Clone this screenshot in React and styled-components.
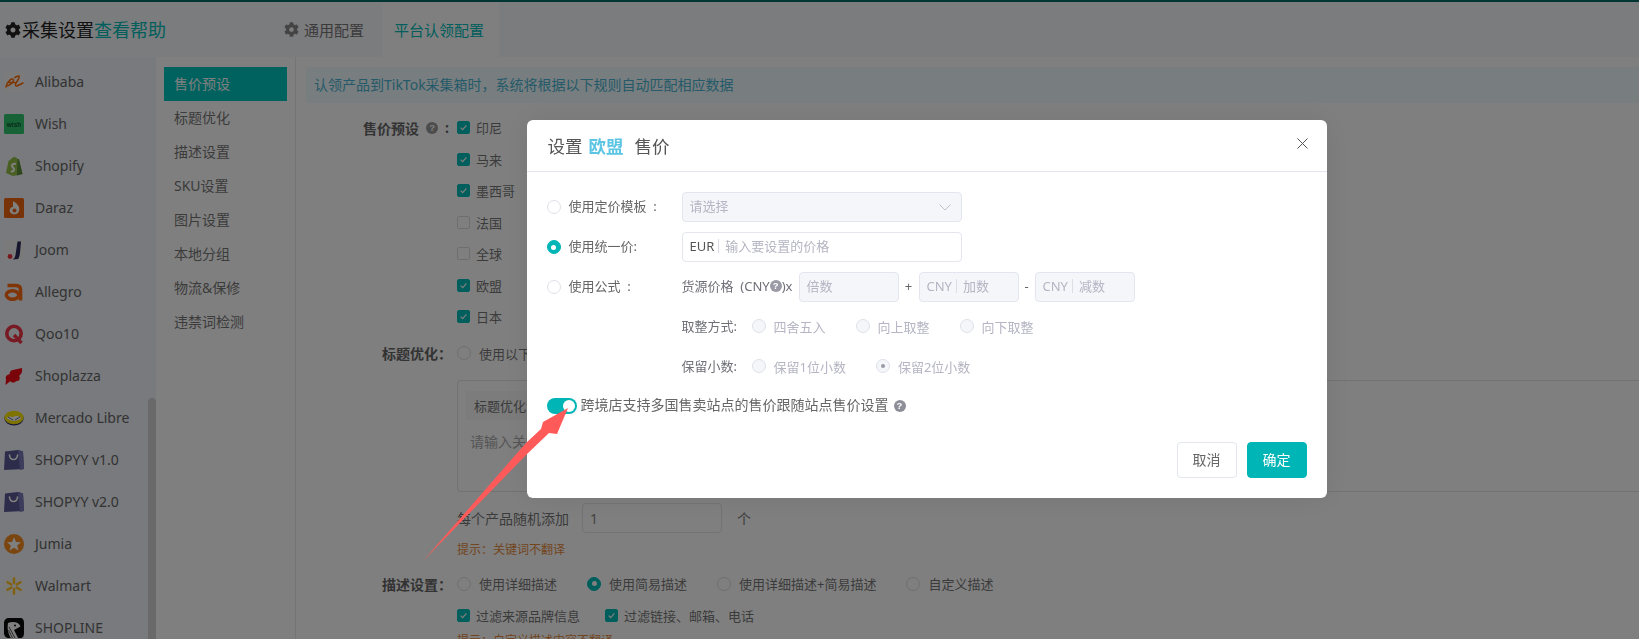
import React from "react";
import styled, { createGlobalStyle } from "styled-components";
import { FaCog } from "react-icons/fa";

const Global = createGlobalStyle`
  html, body { margin: 0; padding: 0; background: #fff; }
  body { font-family: "Noto Sans", "Noto Sans CJK SC", sans-serif; font-size: 14px; color: #444; }
  * { box-sizing: border-box; }
`;

const Page = styled.div`
  width: 1639px; height: 639px; overflow: hidden; display: flex; flex-direction: column; background: #fff;
`;
const TopStrip = styled.div`height: 2px; background: #006a68; flex: none;`;
const Header = styled.header`
  height: 55px; flex: none; display: flex; align-items: stretch; background: #f7f8fc;
`;
const Title = styled.div`
  display: flex; align-items: center; padding-left: 5px; width: 284px; font-size: 18px; line-height: 24px; color: #222;
  svg { font-size: 16px; margin-right: 1px; }
`;
const HelpLink = styled.span`color: #00bdb8;`;
const Tab = styled.div`
  display: flex; align-items: center; gap: 5px; font-size: 15px; padding: ${p => (p.$active ? "0 15px 0 12px" : "0 18px 0 0")};
  background: ${p => (p.$active ? "#fff" : "transparent")};
  color: ${p => (p.$active ? "#00bdb8" : "#777")};
  svg { font-size: 15px; color: #888; }
`;
const Body = styled.div`flex: 1; display: flex; min-height: 0;`;

const Sidebar = styled.nav`
  position: relative; width: 156px; flex: none; padding-top: 4px; background: #f1f4fa; overflow: hidden;
`;
const Thumb = styled.div`
  position: absolute; right: 0; top: 341px; bottom: 0; width: 8px; border-radius: 4px 4px 0 0; background: #d2d2d2;
`;
const PlatformRow = styled.div`
  height: 42px; display: flex; align-items: center; gap: 11px; padding-left: 4px; color: #666; font-size: 14px; line-height: 20px;
  svg { flex: none; }
`;

const SubNav = styled.nav`
  width: 140px; flex: none; padding: 10px 8px 0; border-right: 1px solid #e9e9e9; background: #fff;
`;
const SubItem = styled.div`
  height: 34px; display: flex; align-items: center; padding: 0 0 2px 10px; font-size: 14px;
  background: ${p => (p.$active ? "#00c4bc" : "transparent")};
  color: ${p => (p.$active ? "#fff" : "#777")};
`;

const Content = styled.main`flex: 1; padding: 10px 0 0 10px; min-width: 0; background: #fff;`;
const Alert = styled.div`
  height: 36px; display: flex; align-items: center; padding: 0 0 2px 8px; background: #f0fbfe; border-radius: 3px 0 0 3px;
  color: #49b5d2; font-size: 14px;
`;
const FormRow = styled.div`
  display: flex; align-items: center; min-height: 31.5px; margin-top: ${p => p.$mt || 0}px;
`;
const FormLabel = styled.div`
  width: 151px; flex: none; padding-right: ${p => p.$pr ?? 5}px; display: flex; justify-content: flex-end; align-items: center; gap: 7px;
  font-weight: 700; color: #666; font-size: 14px; white-space: nowrap;
`;
const FormValue = styled.div`display: flex; align-items: center; flex: 1; min-width: 0; color: #777; font-size: 13px; white-space: nowrap;`;
const CheckItem = styled.label`
  display: inline-flex; align-items: center; gap: 6px; margin-right: ${p => p.$mr || 0}px; color: #777;
`;
const Check = styled.span`
  width: 13px; height: 13px; flex: none; border-radius: 2px; display: inline-flex; align-items: center; justify-content: center;
  background: ${p => (p.$on ? "#00bdb8" : "#fff")};
  border: 1px solid ${p => (p.$on ? "#00bdb8" : "#ddd")};
  svg { display: block; }
`;
const PageRadio = styled.span`
  width: 14px; height: 14px; flex: none; border-radius: 50%; display: inline-flex; align-items: center; justify-content: center;
  border: 1px solid #ddd; background: ${p => (p.$on ? "#00bdb8" : "#fff")};
  border-color: ${p => (p.$on ? "#00bdb8" : "#ddd")};
  &::after { content: ""; width: 5px; height: 5px; border-radius: 50%; background: ${p => (p.$on ? "#fff" : "transparent")}; }
`;
const RadioItem = styled.label`
  display: inline-flex; align-items: center; gap: 8px; margin-right: ${p => p.$mr || 0}px; color: #777;
`;
const KeywordBox = styled.div`
  margin: 11px 0 0 151px; height: 112px; padding: 10px 8px; border: 1px solid #e4e4e4; border-right: 0; border-radius: 4px 0 0 4px;
`;
const KeywordHead = styled.div`
  height: 29px; width: 300px; display: flex; align-items: center; padding-left: 8px; background: #f8f8f8; font-size: 13px; color: #777;
`;
const KeywordHint = styled.div`margin: 12px 0 0 4px; color: #aaa; font-size: 14px; line-height: 20px;`;
const CountRow = styled.div`
  margin: 11px 0 0 151px; height: 30px; display: flex; align-items: center; color: #777;
`;
const CountInput = styled.div`
  width: 140px; height: 30px; margin: 0 15px 0 13px; padding-left: 7px; display: flex; align-items: center;
  border: 1px solid #e4e6ef; border-radius: 4px; color: #888;
`;
const Tip = styled.div`
  margin: ${p => p.$mt || 0}px 0 0 151px; height: 20px; line-height: 20px; font-size: 12px; color: #e68a3c;
`;

const HelpDot = styled.span`
  width: 12px; height: 12px; flex: none; border-radius: 50%; display: inline-flex; align-items: center; justify-content: center;
  background: ${p => p.$color || "#8e8e98"}; color: #fff; font: 700 9.5px/12px "Liberation Sans", sans-serif;
`;
const SwitchHelp = styled(HelpDot)`margin-left: 5px;`;

const Overlay = styled.div`
  position: fixed; inset: 0; padding: 0 0 21px 214px; background: rgba(0, 0, 0, 0.5); display: flex; align-items: center; justify-content: center;
`;
const Modal = styled.section`
  width: 800px; height: 378px; display: flex; flex-direction: column; background: #fff; border-radius: 6px;
  box-shadow: 0 0 30px rgba(0, 0, 0, 0.08);
`;
const ModalHead = styled.div`
  height: 52px; flex: none; display: flex; align-items: center; justify-content: space-between; padding: 0 19px 0 21px;
  border-bottom: 1px solid #e4e6ef; font-size: 17.5px; color: #555;
`;
const Strong = styled.strong`color: #5bc5e3; margin: 0 11px 0 6px; font-weight: 700;`;
const Close = styled.button`
  border: 0; background: none; padding: 0; display: flex; color: #555; margin-top: -4px;
`;
const ModalBody = styled.div`flex: 1; padding: 20px 0 0 20px; color: #666; font-size: 13px;`;
const MRow = styled.div`
  display: flex; align-items: center; height: 30px; margin-top: ${p => p.$mt ?? 10}px; &:first-child { margin-top: 0; }
`;
const MRadio = styled.span`
  width: 14px; height: 14px; flex: none; border-radius: 50%; display: inline-flex; align-items: center; justify-content: center;
  border: 1px solid ${p => (p.$on ? "#00b5b5" : "#dfe1ea")};
  background: ${p => (p.$on ? "#00b5b5" : p.$off ? "#f5f6fa" : "#fff")};
  &::after {
    content: ""; width: ${p => (p.$on ? 5 : p.$grayDot ? 4 : 0)}px; height: ${p => (p.$on ? 5 : p.$grayDot ? 4 : 0)}px;
    border-radius: 50%; background: ${p => (p.$on ? "#fff" : "#9a9aa6")};
  }
`;
const MLabel = styled.span`width: 113px; margin-left: 8px; padding-bottom: 3px; flex: none; color: #666; white-space: nowrap;`;
const MIndent = styled.div`width: 135px; flex: none;`;
const Field = styled.div`
  width: ${p => p.$w}px; height: 30px; flex: none; display: flex; align-items: center; padding: 0 7px 3px;
  border: 1px solid #e4e6ef; border-radius: 4px; background: ${p => (p.$off ? "#f5f6fa" : "#fff")};
  color: ${p => (p.$off ? "#b5b5c3" : "#555")}; white-space: nowrap;
`;
const Unit = styled.span`
  padding-right: 4px; margin-right: 6px; line-height: 14px; border-right: 1px solid #dcdde5;
`;
const Hint = styled.span`color: #b5b5c3;`;
const Chevron = styled.span`margin: 3px 3px 0 auto; display: flex; color: #c0c2cd;`;
const FormulaText = styled.span`
  width: 117px; flex: none; padding-bottom: 3px; display: inline-flex; align-items: center; color: #6f6f78; white-space: pre;
`;
const Operator = styled.span`width: ${p => p.$w}px; padding-bottom: 3px; text-align: center; flex: none; color: #666;`;
const SubLabel = styled.span`width: 70px; padding-bottom: 2px; flex: none; color: #6f6f78;`;
const OffChoice = styled.span`
  display: inline-flex; align-items: center; gap: 8px; margin-right: 30px; color: #b5b5c3; white-space: nowrap;
`;
const SwitchRow = styled.div`
  display: flex; align-items: center; height: 16px; margin-top: 17px; color: #666; font-size: 14px; white-space: nowrap;
`;
const SwitchText = styled.span`padding-bottom: 4px;`;
const Switch = styled.span`
  width: 30px; height: 16px; flex: none; margin-right: 4px; display: flex; justify-content: flex-end; align-items: center; padding: 2px;
  border-radius: 8px; background: #00b5b5;
  &::after { content: ""; width: 12px; height: 12px; border-radius: 50%; background: #fff; }
`;
const ModalFoot = styled.div`
  flex: none; display: flex; justify-content: flex-end; gap: 10px; padding: 0 20px 20px 0;
`;
const Btn = styled.button`
  width: 60px; height: 36px; padding: 0 0 2px; border-radius: 4px; font: 14px "Noto Sans", "Noto Sans CJK SC", sans-serif;
  border: 1px solid ${p => (p.$primary ? "#00b5b5" : "#e4e6ef")};
  background: ${p => (p.$primary ? "#00b5b5" : "#fff")};
  color: ${p => (p.$primary ? "#fff" : "#666")};
`;
const ArrowLayer = styled.svg`position: fixed; inset: 0; pointer-events: none;`;

const I = ({ children, bg }) => (
  <svg width="20" height="20" viewBox="0 0 20 20" style={bg ? { background: bg } : undefined}>{children}</svg>
);
const Bag = () => (
  <I>
    <path d="M1 1.5 L14 0 L19 1.5 L20 19 L0 20 Z" fill="#5a5896" />
    <path d="M14 0 L19 1.5 L20 19 L16 20 Z" fill="#7a78b8" />
    <path d="M5.5 5 C6 11 13 11 13.5 5" fill="none" stroke="#fff" strokeWidth="1.6" strokeLinecap="round" />
  </I>
);
const icons = {
  Alibaba: (
    <I bg="#f6f6f6">
      <path d="M2 15 C3 9 9 5 9.5 8 C10 11 3 15 2.5 13.5 M5 10.5 H11 M11 5.5 C17 2 16 5 12 11 C11 13.5 11.5 14 13 14 L19 11" fill="none" stroke="#ff6a00" strokeWidth="1.5" strokeLinecap="round" />
    </I>
  ),
  Wish: (
    <I>
      <rect width="20" height="20" rx="1.5" fill="#2fc76e" />
      <text x="10" y="12.5" textAnchor="middle" fontSize="6.5" fontWeight="700" fontFamily="Liberation Sans" fill="#0c5a30">wish</text>
    </I>
  ),
  Shopify: (
    <I>
      <path d="M2 17 L4.5 5 C6 4 7.5 3 8 2 C10 0 12.5 1 13.5 3 L15 3.5 L18.5 18 L9 20 Z" fill="#95bf47" />
      <path d="M15 3.5 L18.5 18 L13 19.5 L13.5 3 Z" fill="#5e8e3e" />
      <path d="M12 8 C9 7 7 9 8.5 11 C10 12.5 11 13 9.5 15 C8.5 15.8 7 15 7 15" fill="none" stroke="#fff" strokeWidth="2" />
    </I>
  ),
  Daraz: (
    <I>
      <rect width="20" height="20" rx="1.5" fill="#f0650f" />
      <path d="M9 3 C14 6 16 9 15 13 C14 17 8 17.5 6 14 C5 11 7 9 9 9 Z" fill="#fff" />
      <circle cx="10.5" cy="12.5" r="2" fill="#f0650f" />
    </I>
  ),
  Joom: (
    <I bg="#f5f5f7">
      <circle cx="6" cy="16.5" r="2.4" fill="#f0323c" />
      <path d="M13.5 1.5 L11.5 15 C11 18 9.5 19 8.5 19.5 L14 19 C15 18 15.5 16 16 13 L17 1.5 Z" fill="#2a2a5a" />
    </I>
  ),
  Allegro: (
    <I>
      <path d="M3.5 3.5 H12 C15.5 3.5 16.5 5.5 16.5 8 V18.5" fill="none" stroke="#ff6a10" strokeWidth="3.6" />
      <ellipse cx="8.5" cy="13" rx="6.2" ry="4.2" fill="none" stroke="#ff6a10" strokeWidth="3.4" />
    </I>
  ),
  Qoo10: (
    <I>
      <circle cx="10" cy="9.5" r="7.2" fill="none" stroke="#f03447" strokeWidth="3.6" />
      <path d="M10 11 L17.5 19" stroke="#f03447" strokeWidth="3.4" />
    </I>
  ),
  Shoplazza: (
    <I>
      <path d="M9 4 L18 2 C18.5 5 18 8 15 10 C17 12 15 16 12 15 C11 17 7 17 6.5 15 L1.5 19 L2 13 C1 11 3 8 5.5 8.5 C5.5 6 7 4 9 4 Z" fill="#f20a14" />
    </I>
  ),
  "Mercado Libre": (
    <I>
      <ellipse cx="10" cy="10.5" rx="9.6" ry="7" fill="#2d3277" />
      <ellipse cx="10" cy="9.5" rx="9.6" ry="6.8" fill="#ffe600" />
      <path d="M2.5 10 C6 6.5 8 10 10 8.5 C12 7 14 8 17.5 10 C14 13.5 7 14 2.5 10 Z" fill="#fff" />
      <path d="M4 9 L9 12 M16 9 L11 12" stroke="#2d3277" strokeWidth=".7" />
    </I>
  ),
  "SHOPYY v1.0": <Bag />,
  "SHOPYY v2.0": <Bag />,
  Jumia: (
    <I>
      <circle cx="10" cy="10" r="10" fill="#f68b1e" />
      <path d="M10 3.2 L12 8 L17 8.3 L13.2 11.5 L14.4 16.5 L10 13.8 L5.6 16.5 L6.8 11.5 L3 8.3 L8 8 Z" fill="#fff" />
    </I>
  ),
  Walmart: (
    <I bg="#f4f4f4">
      <g stroke="#ffc220" strokeWidth="2.4" strokeLinecap="round">
        <path d="M10 2.5 V7" /><path d="M10 13 V17.5" />
        <path d="M3.5 6.2 L7.4 8.5" /><path d="M12.6 11.5 L16.5 13.8" />
        <path d="M3.5 13.8 L7.4 11.5" /><path d="M12.6 8.5 L16.5 6.2" />
      </g>
    </I>
  ),
  SHOPLINE: (
    <I>
      <path d="M5 0 H16 C19 0 20 2 20 5 V15 C20 18 19 20 16 20 H5 C2 20 0 18 0 15 V5 C0 2 2 0 5 0 Z" fill="#0b0b0b" />
      <path d="M4 5 C9 3 15 4 16.5 8.5 L10 12 L14 20 H7 C4 16 3 10 4 5 Z" fill="#fff" />
      <circle cx="11" cy="7.5" r="1" fill="#0b0b0b" />
      <path d="M5 9 L11 20 M4.5 12 L8.5 20" stroke="#0b0b0b" strokeWidth=".7" />
    </I>
  ),
};

const Tick = () => (
  <svg width="9" height="9" viewBox="0 0 9 9"><path d="M1.6 4.6 L3.7 6.6 L7.4 2.4" fill="none" stroke="#fff" strokeWidth="1.2" /></svg>
);
const sites = [["印尼", true], ["马来", true], ["墨西哥", true], ["法国", false], ["全球", false], ["欧盟", true], ["日本", true]];
const subItems = ["售价预设", "标题优化", "描述设置", "SKU设置", "图片设置", "本地分组", "物流&保修", "违禁词检测"];

export default function App() {
  return (
    <Page>
      <Global />
      <TopStrip />
      <Header>
        <Title><FaCog />采集设置<HelpLink>查看帮助</HelpLink></Title>
        <Tab><FaCog />通用配置</Tab>
        <Tab $active>平台认领配置</Tab>
      </Header>
      <Body>
        <Sidebar>
          {Object.keys(icons).map(name => (
            <PlatformRow key={name}>{icons[name]}<span>{name}</span></PlatformRow>
          ))}
          <Thumb />
        </Sidebar>
        <SubNav>
          {subItems.map((s, i) => <SubItem key={s} $active={i === 0}>{s}</SubItem>)}
        </SubNav>
        <Content>
          <Alert>认领产品到TikTok采集箱时，系统将根据以下规则自动匹配相应数据</Alert>
          {sites.map(([name, on], i) => (
            <FormRow key={name} $mt={i === 0 ? 9 : 0}>
              <FormLabel $pr={i === 0 ? 8 : 5}>{i === 0 && <>售价预设<HelpDot $color="#999">?</HelpDot>:</>}</FormLabel>
              <FormValue><CheckItem><Check $on={on}>{on && <Tick />}</Check>{name}</CheckItem></FormValue>
            </FormRow>
          ))}
          <FormRow $mt={5}>
            <FormLabel>标题优化：</FormLabel>
            <FormValue><RadioItem><PageRadio />使用以下关键词优化标题</RadioItem></FormValue>
          </FormRow>
          <KeywordBox>
            <KeywordHead>标题优化测试词</KeywordHead>
            <KeywordHint>请输入关键词</KeywordHint>
          </KeywordBox>
          <CountRow>每个产品随机添加<CountInput>1</CountInput>个</CountRow>
          <Tip $mt={7}>提示：关键词不翻译</Tip>
          <FormRow $mt={8}>
            <FormLabel>描述设置：</FormLabel>
            <FormValue>
              <RadioItem $mr={30}><PageRadio />使用详细描述</RadioItem>
              <RadioItem $mr={30}><PageRadio $on />使用简易描述</RadioItem>
              <RadioItem $mr={30}><PageRadio />使用详细描述+简易描述</RadioItem>
              <RadioItem><PageRadio />自定义描述</RadioItem>
            </FormValue>
          </FormRow>
          <FormRow>
            <FormLabel />
            <FormValue>
              <CheckItem $mr={25}><Check $on><Tick /></Check>过滤来源品牌信息</CheckItem>
              <CheckItem><Check $on><Tick /></Check>过滤链接、邮箱、电话</CheckItem>
            </FormValue>
          </FormRow>
          <Tip>提示：自定义描述内容不翻译</Tip>
        </Content>
      </Body>

      <Overlay>
        <Modal>
          <ModalHead>
            <span>设置<Strong>欧盟</Strong>售价</span>
            <Close aria-label="关闭">
              <svg width="11" height="11" viewBox="0 0 11 11"><path d="M.5.5 L10.5 10.5 M10.5.5 L.5 10.5" stroke="currentColor" fill="none" /></svg>
            </Close>
          </ModalHead>
          <ModalBody>
            <MRow>
              <MRadio /><MLabel>使用定价模板{"\u00A0\u00A0"}:</MLabel>
              <Field $w={280} $off>请选择
                <Chevron><svg width="12" height="7" viewBox="0 0 12 7"><path d="M.5.5 L6 6 L11.5.5" fill="none" stroke="currentColor" /></svg></Chevron>
              </Field>
            </MRow>
            <MRow>
              <MRadio $on /><MLabel>使用统一价:</MLabel>
              <Field $w={280}><Unit>EUR</Unit><Hint>输入要设置的价格</Hint></Field>
            </MRow>
            <MRow>
              <MRadio /><MLabel>使用公式{"\u00A0\u00A0"}:</MLabel>
              <FormulaText>货源价格  (CNY<HelpDot $color="#9a9aa6">?</HelpDot>)x</FormulaText>
              <Field $w={100} $off>倍数</Field>
              <Operator $w={20}>+</Operator>
              <Field $w={100} $off><Unit>CNY</Unit>加数</Field>
              <Operator $w={16}>-</Operator>
              <Field $w={100} $off><Unit>CNY</Unit>减数</Field>
            </MRow>
            <MRow $mt={9}>
              <MIndent /><SubLabel>取整方式:</SubLabel>
              <OffChoice><MRadio $off />四舍五入</OffChoice>
              <OffChoice><MRadio $off />向上取整</OffChoice>
              <OffChoice><MRadio $off />向下取整</OffChoice>
            </MRow>
            <MRow $mt={10}>
              <MIndent /><SubLabel>保留小数:</SubLabel>
              <OffChoice><MRadio $off />保留1位小数</OffChoice>
              <OffChoice><MRadio $off $grayDot />保留2位小数</OffChoice>
            </MRow>
            <SwitchRow>
              <Switch /><SwitchText>跨境店支持多国售卖站点的售价跟随站点售价设置</SwitchText>
              <SwitchHelp>?</SwitchHelp>
            </SwitchRow>
          </ModalBody>
          <ModalFoot>
            <Btn>取消</Btn>
            <Btn $primary>确定</Btn>
          </ModalFoot>
        </Modal>
      </Overlay>
      <ArrowLayer width="1639" height="639" viewBox="0 0 1639 639">
        <polygon points="423,561 526,443 541,429 543,422 568,408 557,434 549,433 526,455" fill="#ff5a5a" />
      </ArrowLayer>
    </Page>
  );
}
